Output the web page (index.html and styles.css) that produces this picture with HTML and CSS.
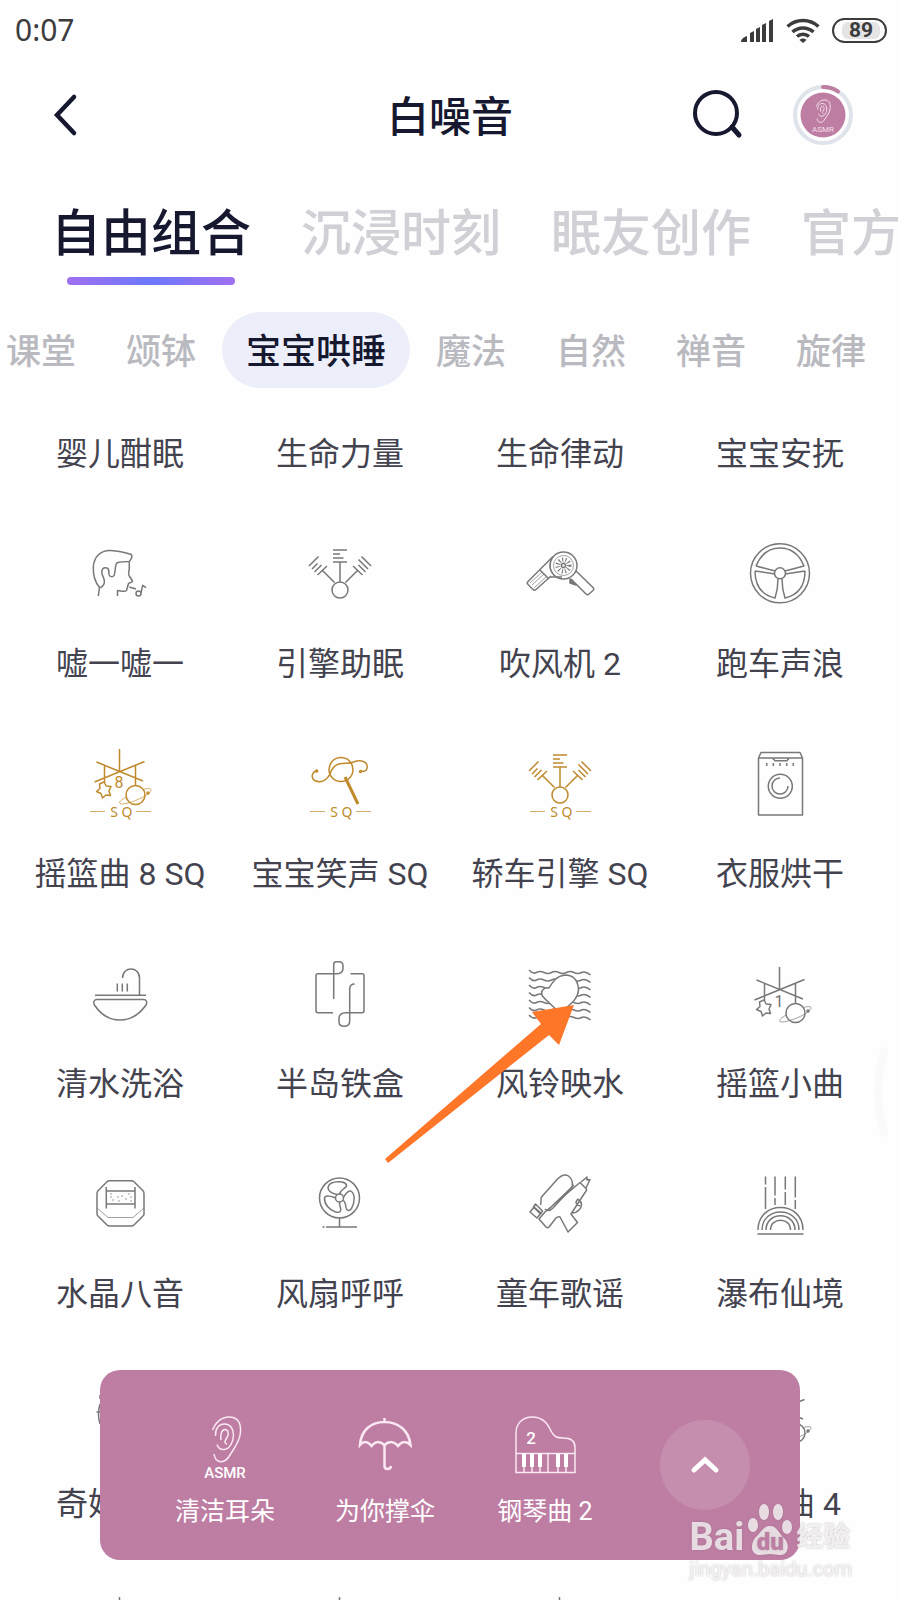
FILE: index.html
```html
<!DOCTYPE html>
<html lang="zh-CN">
<head>
    <meta charset="UTF-8">
    <meta name="viewport" content="width=device-width, initial-scale=1.0">
    <title>白噪音</title>
    <link rel="stylesheet" href="styles.css">
</head>
<body>

    <!-- Shapes used by more than one icon -->
    <svg class="defs" aria-hidden="true">
        <defs>
            <g id="mobile">
                <path d="M39.5 13v22M16.5 26l46.5 19M64.5 25.5L14.5 46M24.5 29v18M55.5 29v20"/>
                <path d="M24 46l2.2 4 4.8.5-2 4.5 1.5 4.5-4.500-.5-3.500 3-1.500-4.500-4.500-2 3.500-3-.5-4.500z"/>
                <circle cx="55.5" cy="59" r="9.5"/>
                <path class="thin" d="M46.500 61c-5 2.500-8 5-6.500 6.500 2 1.500 11-1 18-4 8-3.500 14-8 13-10-.8-1.500-4-1-7.500 0"/>
                <circle class="dot" cx="68" cy="57" r="1"/>
            </g>
            <g id="engine">
                <circle cx="40" cy="56" r="8"/>
                <path d="M33 16h14M33 20h7M33 24h10.5M33 28h14M40 28v20M22 36l12.5 12.5M58 36L45.5 48.5"/>
                <path d="M9 32l9.500-9.500M12 35l5.500-5.500M14.500 38l7-7M17.500 41l9.500-9M71 32l-9.500-9.500M68 35l-9.500-9.500M65.500 38l-7-7M62.500 41l-9.500-9"/>
            </g>
            <g id="sq">
                <path class="thin" d="M10 67.5h15M56 67.5h15"/>
                <text class="sq-text" x="34" y="73">S</text>
                <text class="sq-text" x="47" y="73">Q</text>
            </g>
            <g id="ear">
                <path d="M22.500 19C25 12 31 6 39 6c9 0 12 6 11.500 15-.5 10-7 17-10.500 23-3 5-6 7.500-10.500 6.500-3.500-.8-5-4-5.500-7.500"/>
                <path d="M25.500 25c-.5-7 3-12 9-12s9 5 9 11-3.500 14-9.500 14.500c-4 .3-6-2-7-5"/>
                <path d="M31 29c-1-6 1-10.500 4-10.500s4.500 4 2 8-3 5 0 7"/>
            </g>
        </defs>
    </svg>

    <div class="status-bar">
        <span class="time">0:07</span>
        <div class="status-icons">
            <svg width="33" height="25" viewBox="0 0 33 25" aria-hidden="true">
                <path fill="#3c3c3c" d="M0 24c0-3 3-5 6-6v6zM9 24v-9l4-2v11zM15 24V11l4-2v15zM21 24V7l4-2v19zM28 24V3l4-2v23z"/>
            </svg>
            <svg width="34" height="25" viewBox="0 0 34 25" fill="none" stroke="#3c3c3c" stroke-width="3.500" aria-hidden="true">
                <path d="M1.500 8.500c9-8 22-8 31 0M6.500 14c6-5.500 15-5.500 21 0M11 18.500c3.500-3 8.500-3 12 0"/>
                <path fill="#3c3c3c" stroke="none" d="M13.500 22c2-2 5-2 7 0L17 25z"/>
            </svg>
            <span class="battery"><span>89</span></span>
        </div>
    </div>

    <header class="header">
        <button type="button" class="icon-btn" aria-label="返回">
            <svg width="40" height="46" viewBox="0 0 40 46" fill="none" stroke="#16182f" stroke-width="4.500" stroke-linecap="round">
                <path d="M29 5L12 23l17 18"/>
            </svg>
        </button>
        <h1>白噪音</h1>
        <div class="header-actions">
            <button type="button" class="icon-btn" aria-label="搜索">
                <svg width="60" height="60" viewBox="0 0 60 60" fill="none" stroke="#16182f" stroke-width="4" stroke-linecap="round">
                    <circle cx="29" cy="28" r="21"/>
                    <path d="M45 42l7 8" stroke-width="5"/>
                </svg>
            </button>
            <button type="button" class="icon-btn" aria-label="正在播放">
                <svg class="playing" width="64" height="64" viewBox="0 0 64 64" fill="none">
                    <circle cx="32" cy="32" r="28" stroke="#dfe4eb" stroke-width="4"/>
                    <path d="M32 4c6 0 11 1.500 15 4.500" stroke="#be7ea3" stroke-width="4" stroke-linecap="round"/>
                    <circle cx="32" cy="32" r="22.5" fill="#be7ea3"/>
                    <g transform="translate(14 14) scale(.5)" stroke="#f5dfea" stroke-width="2"><use href="#ear"/></g>
                    <text x="32" y="49">ASMR</text>
                </svg>
            </button>
        </div>
    </header>

    <nav class="tabs">
        <a href="#" class="active">自由组合</a>
        <a href="#">沉浸时刻</a>
        <a href="#">眠友创作</a>
        <a href="#">官方</a>
    </nav>

    <div class="chips">
        <button type="button">课堂</button>
        <button type="button">颂钵</button>
        <button type="button" class="active">宝宝哄睡</button>
        <button type="button">魔法</button>
        <button type="button">自然</button>
        <button type="button">禅音</button>
        <button type="button">旋律</button>
    </div>

    <main>
        <ul class="sounds">
            <li><span>婴儿酣眠</span></li>
            <li><span>生命力量</span></li>
            <li><span>生命律动</span></li>
            <li><span>宝宝安抚</span></li>

            <li>
                <svg viewBox="0 0 80 80">
                    <path d="M19.500 53.500C15 48 13 41 13.300 33 14 23 20 16.500 30 16.500c8 0 14 2 20 3.500 3.500 1 1.500 5-.7 7.500-6 0-10 .5-12.500 1.500-2 2-1 7-2.500 12-1 2.500-5 2-5.300-.5-.2-3 .5-5.500-2-6.500-4-1-6 1.500-5 6 1 3 3 5 2.300 9-.8 2.500-2.500 4.500-4.800 4.500zL18.300 62"/>
                    <path d="M49.300 27.500v6c0 4-1.500 6-.3 8l3.500 5.500c0 2-3 1.500-4 2.500l-2 7c-2 2-6 0-9 0V62M49.300 53l6.700 2"/>
                    <circle cx="58.500" cy="59.500" r="2.500"/>
                    <path d="M61 59l1.700-7.700 3.300 2.400"/>
                </svg>
                <span>嘘一嘘一</span>
            </li>
            <li>
                <svg viewBox="0 0 80 80"><use href="#engine"/></svg>
                <span>引擎助眠</span>
            </li>
            <li>
                <svg viewBox="0 0 80 80">
                    <circle cx="43.500" cy="31.500" r="13.500"/>
                    <circle class="thin" cx="43.500" cy="31.500" r="10"/>
                    <circle class="dashes" cx="43.500" cy="31.500" r="5.500"/>
                    <circle class="dot" cx="43.500" cy="31.500" r="2"/>
                    <path d="M33 22.500L8 47.500c-1 1-1 2 0 3l5 5c1 1 2 1 3 0L31 42M20 36l9 9M30 43h12"/>
                    <path class="thin" d="M31 26l-1 8 4 8M10 49l12-11M12 51l12-11M14 54l13-12"/>
                    <path d="M56 37l17 16.500c1 1 1 2 0 3L69 60c-1 1-2 1-3 0L51 45"/>
                    <path fill="#787878" d="M50 45v4l6 2z"/>
                </svg>
                <span>吹风机 2</span>
            </li>
            <li>
                <svg viewBox="0 0 80 80">
                    <circle cx="40" cy="39.300" r="29.500"/>
                    <circle cx="40" cy="39.300" r="5.500"/>
                    <path d="M16 32C21 20 29 14 40 14s19 6 24 18l-19 5M16 32l19 5M15 37l20 3M65 37l-20 3M15 37c0 15 7 24 20 27 2-6 3-12 3-19M65 37c0 15-7 24-20 27-2-6-3-12-3-19"/>
                </svg>
                <span>跑车声浪</span>
            </li>

            <li>
                <svg class="gold" viewBox="0 0 80 80">
                    <g transform="translate(0 -8)"><use href="#mobile"/></g>
                    <text class="number" x="39" y="44">8</text>
                    <use href="#sq"/>
                </svg>
                <span>摇篮曲 8 SQ</span>
            </li>
            <li>
                <svg class="gold" viewBox="0 0 80 80">
                    <circle cx="41" cy="25.500" r="12"/>
                    <path d="M16.700 27c-5 1-6 7-2 9.500 6 3 12 0 15-6 2-6 4-9 9-10.500 6-1.500 11 0 15-2 7-3 14 0 13.500 5 0 4-3 5-6.500 4"/>
                    <circle class="dot" cx="16.700" cy="27" r="1"/>
                    <circle class="dot" cx="60.500" cy="27.500" r="1"/>
                    <path class="thick" d="M45 33l13 27"/>
                    <use href="#sq"/>
                </svg>
                <span>宝宝笑声 SQ</span>
            </li>
            <li>
                <svg class="gold" viewBox="0 0 80 80">
                    <g transform="translate(0 -5)"><use href="#engine"/></g>
                    <use href="#sq"/>
                </svg>
                <span>轿车引擎 SQ</span>
            </li>
            <li>
                <svg viewBox="0 0 80 80">
                    <path d="M18.500 14h44v57h-44zL21 8.500h39l2.500 5.500M32.500 14l2.500 2.700h12l2-2.700M26.700 19v3M33.300 19v3M40 19v3M46.700 19v3M53.300 19v3"/>
                    <circle cx="40.300" cy="42.300" r="12"/>
                    <path d="M48 42a8 8 0 1 1-8-8"/>
                </svg>
                <span>衣服烘干</span>
            </li>

            <li>
                <svg viewBox="0 0 80 80">
                    <path d="M42.500 24c0-12 17-12 17 0v17M37.300 29.500v8M42.300 29.500v8M47.300 29.500v8M15 41.300h51"/>
                    <path d="M17 45.500h46.500c3 0 4 3 2.500 5.500C59 61 50 66 40 66S21 61 14.500 51c-1.500-2.500-.5-5.500 2.500-5.500z"/>
                </svg>
                <span>清水洗浴</span>
            </li>
            <li>
                <svg viewBox="0 0 80 80">
                    <path d="M33 58.700H18c-1.500 0-2-.5-2-2v-35c0-1.500.5-2 2-2h18c4 0 7-1.500 7-5v-3c0-3-1.500-4-4-4h-2.500c-2 0-2.800.5-2.800 2.500V45"/>
                    <path d="M50.500 19.700H62c1.500 0 2 .5 2 2v35c0 1.500-.5 2-2 2H46c-4 0-7 2-7 6v3c0 3 2 4.500 5 4.500 4 0 5.700-2 5.700-5V35c0-3 2-5 5-5"/>
                </svg>
                <span>半岛铁盒</span>
            </li>
            <li>
                <svg viewBox="0 0 80 80">
                    <path d="M9 16q4 4.500 7.500 2.500t7.500 0 7.500 0 7.500 0 7.500 0 7.500 0 7.500 0 9 2.500"/>
                    <path d="M9 23.500q4 4.500 7.500 2.500t7.500 0 7.500 0 7.500 0 7.500 0 7.500 0 7.500 0 9 2.500"/>
                    <path d="M9 31q4 4.500 7.500 2.500t7.500 0 7.500 0 7.500 0 7.500 0 7.500 0 7.500 0 9 2.500"/>
                    <path d="M9 38.500q4 4.500 7.500 2.500t7.500 0 7.500 0 7.500 0 7.500 0 7.500 0 7.500 0 9 2.500"/>
                    <path d="M9 46q4 4.500 7.500 2.500t7.500 0 7.500 0 7.500 0 7.500 0 7.500 0 7.500 0 9 2.500"/>
                    <path d="M9 53.500q4 4.500 7.500 2.500t7.500 0 7.500 0 7.500 0 7.500 0 7.500 0 7.500 0 9 2.500"/>
                    <path d="M9 61q4 4.500 7.500 2.500t7.500 0 7.500 0 7.500 0 7.500 0 7.500 0 7.500 0 9 2.500"/>
                    <path fill="#fff" d="M29 34c-6-1-9 4-6.500 8 4 5 9 9 14.500 14 3 2 7 1 9-2 6-5 12-10 12.500-18C58 26 53 21 45 21c-8 1-12 6-16 13z"/>
                </svg>
                <span>风铃映水</span>
                <svg class="arrow" viewBox="0 0 190 162" aria-hidden="true">
                    <path d="M189 1L147 8l9 12L0 155l3 4L164 31l10 10z"/>
                </svg>
            </li>
            <li>
                <svg viewBox="0 0 80 80">
                    <use href="#mobile"/>
                    <text class="number" x="39" y="53">1</text>
                </svg>
                <span>摇篮小曲</span>
            </li>

            <li>
                <svg viewBox="0 0 80 80">
                    <path d="M30 16.700h21q2 0 3 1l9 9q1 1 1 3V50q0 1-1 2l-9 9q-1 1-3 1H30q-2 0-3-1l-9-9q-1-1-1-2V29.700q0-2 1-3l9-9q1-1 3-1z"/>
                    <path d="M26.300 23v21.500M55 23v21.500M26.300 27H55M26.300 40H55"/>
                    <path class="thin" d="M17 44l11 9.500h25L64 44M30 30h2M37 33h2M48 30h2M32 36h2M41 32h2M45 35h2M50 37h2M50 33h2M30 33h2M38 37h2"/>
                </svg>
                <span>水晶八音</span>
            </li>
            <li>
                <svg viewBox="0 0 80 80">
                    <circle cx="39.500" cy="34" r="20"/>
                    <circle cx="39.500" cy="34" r="4"/>
                    <path d="M37 30.500c-5-1-9-3-9-7 1-5 8-6 14-5.500 5 1 6 4 2 6.500-3 2-4 3-4.500 5.500M43.500 33c3-5 6-7 8-5.500 4 3 3 12 0 17-2 3-5 2.500-5.500-1-.5-4-1-6-3-7.500M35.500 34c-4-2-10-3-11 0-.5 6 5 12 11 14 5 1 6-1 5-4-1-3-1-5-1-6M39.500 54v9M26 63h31M22.500 63h2"/>
                </svg>
                <span>风扇呼呼</span>
            </li>
            <li>
                <svg viewBox="0 0 80 80">
                    <path d="M20.500 41c1-3 0-6 1-8l16-18c4-4 8-5 11-3 4 3 5 8 3 12L33 44c-3 3-6 3-8 1"/>
                    <path d="M60 18.500l6 6c1 1 0 3-1 4L51 50l6.500 8.500L48 68l-8-15c-2-1-3 0-4 1l-7 9c-1 1-2 1-3 0l-7-8 6-7zM61 18l6-5v3l3-.5-4 8.500M57 35c5 2 6 7 2 11-2 2-4 3-7 3M57 36c-2 3-1 5 3 6M54 21L28 46"/>
                    <path d="M15.500 40l7 7-2 3-7-7zM14 43l-4 5 7 6 4-5z"/>
                </svg>
                <span>童年歌谣</span>
            </li>
            <li>
                <svg viewBox="0 0 80 80">
                    <path d="M25.500 12.500v8M25.500 23v22M35 12.500v19M35 34v7M45.300 12.500v13M45.300 28v13M55.300 12.500v21M55.300 36v9"/>
                    <path d="M18 66c0-30 45-30 45 0M22 66c0-24 37-24 37 0M26 66c0-19 29-19 29 0M30.500 66c0-13 20-13 20 0M17.500 70h46"/>
                </svg>
                <span>瀑布仙境</span>
            </li>

            <li>
                <svg viewBox="0 0 80 80"><path d="M20 30q-3 10 0 20M16.500 38h5M20 25v-4"/></svg>
                <span>奇妙梦境</span>
            </li>
            <li></li>
            <li></li>
            <li>
                <svg viewBox="0 0 80 80">
                    <use href="#mobile"/>
                    <text class="number" x="39" y="53">4</text>
                </svg>
                <span>摇篮曲 4</span>
            </li>

            <li><svg viewBox="0 0 80 80"><use href="#mobile"/></svg></li>
            <li><svg viewBox="0 0 80 80"><use href="#mobile"/></svg></li>
            <li><svg viewBox="0 0 80 80"><use href="#mobile"/></svg></li>
        </ul>
    </main>

    <svg class="edge-handle" width="16" height="90" viewBox="0 0 16 90" aria-hidden="true">
        <path d="M12 1C3 30 3 60 12 89" fill="none" stroke="#fafafa" stroke-width="8"/>
    </svg>

    <section class="player">
        <div class="track">
            <svg viewBox="0 0 70 70">
                <use href="#ear"/>
                <text x="35" y="67">ASMR</text>
            </svg>
            <span>清洁耳朵</span>
        </div>
        <div class="track">
            <svg class="bold" viewBox="0 0 70 70">
                <path d="M34.500 7v3M10 34c1-14 10-23 24.500-23S59 20 60.500 34c-4-4-9-4-12.500 1-4-5-9-5-13.500-1-5-4-9-4-13 1-3.500-5-8-5-11.500-1zM34.500 34v21c0 4 6 4 6.500 0"/>
            </svg>
            <span>为你撑伞</span>
        </div>
        <div class="track">
            <svg viewBox="0 0 70 70">
                <path d="M6 61.500V22C6 12 13 6 22.500 6 33 6 38 13 41 20c3 6 6 7 12 7 8 0 12 3 12 9v25.500zM6 42.500h59M14 56v5M22 56v5M30 56v5M38 42v19M48 56v5M56 56v5"/>
                <path class="keys" d="M12 43h4v13h-4zM20 43h4v13h-4zM28 43h4v13h-4zM46 43h4v13h-4zM54 43h4v13h-4z"/>
                <text class="number" x="21" y="33">2</text>
            </svg>
            <span>钢琴曲 2</span>
        </div>
        <button type="button" class="expand" aria-label="展开">
            <svg width="32" height="20" viewBox="0 0 32 20" fill="none" stroke="#fff" stroke-width="5" stroke-linecap="round">
                <path d="M5 15L16 5l11 10"/>
            </svg>
        </button>
    </section>

    <div class="watermark">
        <div class="watermark-logo">
            <span>Bai</span>
            <span class="paw">
                <svg width="46" height="54" viewBox="0 0 46 54" aria-hidden="true">
                    <ellipse cx="6" cy="22" rx="5" ry="7"/>
                    <ellipse cx="17" cy="9" rx="5" ry="8"/>
                    <ellipse cx="31" cy="9" rx="5" ry="8"/>
                    <ellipse cx="40" cy="24" rx="5" ry="7"/>
                    <path d="M23 23c7 0 9 8 14 12 6 6 5 17-4 17-4 0-6-1-10-1s-6 1-10 1c-9 0-10-10-5-17 5-4 8-12 15-12z"/>
                </svg>
                <b>du</b>
            </span>
            <span class="cn">经验</span>
        </div>
        <div class="watermark-url">jingyan.baidu.com</div>
    </div>

</body>
</html>
```
FILE: styles.css
```css
* {
    box-sizing: border-box;
}
body {
    margin: 0;
    height: 100vh;
    overflow: hidden;
    background-color: #fefefe;
    font-family: Roboto, "Noto Sans CJK SC", sans-serif;
    color: #43434f;
}
button {
    padding: 0;
    border: none;
    background: none;
    font-family: inherit;
    cursor: pointer;
}
svg {
    display: block;
}
.defs {
    position: absolute;
    width: 0;
    height: 0;
}

/* Status bar */
.status-bar {
    display: flex;
    justify-content: space-between;
    align-items: center;
    height: 60px;
    padding: 0 13px 0 15px;
    color: #3c3c3c;
}
.time {
    font-family: "Noto Sans", sans-serif;
    font-size: 30px;
    line-height: 60px;
}
.status-icons {
    display: flex;
    align-items: center;
    gap: 12px;
}
.battery {
    width: 55px;
    height: 25px;
    padding: 2px 5px 2px 8px;
    border: 2px solid #3c3c3c;
    border-radius: 13px;
}
.battery span {
    display: block;
    border-radius: 6px;
    background-color: #e4e4e4;
    font-size: 21px;
    font-weight: bold;
    line-height: 17px;
    text-align: center;
}

/* Header */
.header {
    display: grid;
    grid-template-columns: 1fr auto 1fr;
    align-items: center;
    height: 110px;
    padding: 0 45px;
}
.header h1 {
    margin: 0;
    padding-top: 6px;
    color: #16182f;
    font-size: 42px;
    font-weight: 500;
    line-height: 60px;
}
.header-actions {
    display: flex;
    justify-content: flex-end;
    align-items: center;
    gap: 44px;
}
.header .icon-btn {
    justify-self: start;
}
.playing text {
    fill: #f5dfea;
    font-size: 8px;
    text-anchor: middle;
}

/* Main tabs */
.tabs {
    display: flex;
    gap: 50px;
    padding: 31px 0 0 51px;
    overflow: hidden;
}
.tabs a {
    flex: none;
    color: #d0d0d6;
    font-size: 50px;
    font-weight: 500;
    line-height: 66px;
    text-decoration: none;
}
.tabs .active {
    color: #16182f;
}
.tabs .active::after {
    content: "";
    display: block;
    height: 8px;
    margin: 10px 16px 0;
    border-radius: 4px;
    background: linear-gradient(to right, #a070f0, #6c78fa, #a070f0);
}

/* Categories */
.chips {
    display: flex;
    gap: 2px;
    margin: 27px 0 0 -18px;
    overflow: hidden;
}
.chips button {
    flex: none;
    height: 76px;
    padding: 0 24px 4px;
    border-radius: 38px;
    color: #b9b9c0;
    font-size: 35px;
    font-weight: 500;
}
.chips .active {
    background-color: #eceef9;
    color: #16182f;
}

/* Sound grid */
.sounds {
    display: grid;
    grid-template-columns: repeat(4, 1fr);
    row-gap: 58px;
    margin: 0;
    padding: 44px 10px 0;
    list-style: none;
}
.sounds li {
    display: flex;
    flex-direction: column;
    align-items: center;
    gap: 28px;
    position: relative;
}
.sounds svg {
    width: 80px;
    height: 80px;
    fill: none;
    stroke: #787878;
    stroke-width: 1.5;
    stroke-linejoin: round;
}
.sounds span {
    font-size: 32px;
    line-height: 44px;
    white-space: nowrap;
}
.sounds .gold {
    stroke: #c08a2c;
}
.sounds text {
    fill: #707070;
    stroke: none;
    text-anchor: middle;
}
.sounds .gold text {
    fill: #c08a2c;
}
.sounds .number {
    font-size: 16px;
}
.sq-text {
    fill: #c08a2c;
    stroke: none;
    font-family: "Noto Sans", sans-serif;
    font-size: 14px;
    text-anchor: middle;
}
.thin {
    stroke-width: 1;
    opacity: .7;
}
.sounds .thick {
    stroke-width: 3;
}
.sounds .dashes {
    stroke-width: 5;
    stroke-dasharray: 1 2;
}
.sounds .arrow {
    position: absolute;
    top: 50px;
    left: -65px;
    z-index: 1;
    width: 190px;
    height: 162px;
    fill: #fe7628;
    stroke: none;
}
.edge-handle {
    position: absolute;
    top: 1047px;
    right: 11px;
}

/* Mini player */
.player {
    display: flex;
    align-items: center;
    position: fixed;
    right: 100px;
    bottom: 40px;
    left: 100px;
    z-index: 2;
    height: 190px;
    padding: 0 50px 0 45px;
    border-radius: 20px;
    background-color: #be7ea3;
    color: #fff;
}
.track {
    display: flex;
    flex-direction: column;
    align-items: center;
    gap: 14px;
    width: 160px;
    padding-top: 10px;
}
.track svg {
    width: 70px;
    height: 70px;
    fill: none;
    stroke: #fbe8f2;
    stroke-width: 1.5;
}
.track .bold {
    stroke-width: 2.5;
}
.track .keys {
    fill: #fff;
    stroke: none;
}
.track text {
    fill: #fff;
    stroke: none;
    font-size: 15px;
    font-weight: 500;
    text-anchor: middle;
}
.track .number {
    font-size: 17px;
}
.track span {
    font-size: 25px;
    line-height: 34px;
}
.expand {
    display: flex;
    justify-content: center;
    align-items: center;
    width: 90px;
    height: 90px;
    margin-left: auto;
    border-radius: 50%;
    background-color: rgba(255, 255, 255, .12);
}

/* Watermark */
.watermark {
    position: fixed;
    right: 48px;
    bottom: 19px;
    z-index: 3;
    color: rgba(255, 255, 255, .75);
    text-shadow: 0 0 2px rgba(120, 100, 110, .5);
}
.watermark-logo {
    display: flex;
    align-items: flex-end;
    font-size: 38px;
    font-weight: bold;
    line-height: 40px;
}
.paw {
    position: relative;
    margin: 0 3px;
}
.paw svg {
    fill: rgba(255, 255, 255, .75);
    filter: drop-shadow(0 0 1px rgba(120, 100, 110, .5));
}
.paw b {
    position: absolute;
    right: 0;
    bottom: 0;
    left: 0;
    color: #be7ea3;
    font-size: 24px;
    line-height: 30px;
    text-align: center;
}
.cn {
    font-size: 27px;
}
.watermark-url {
    font-size: 20px;
    line-height: 24px;
}
```
